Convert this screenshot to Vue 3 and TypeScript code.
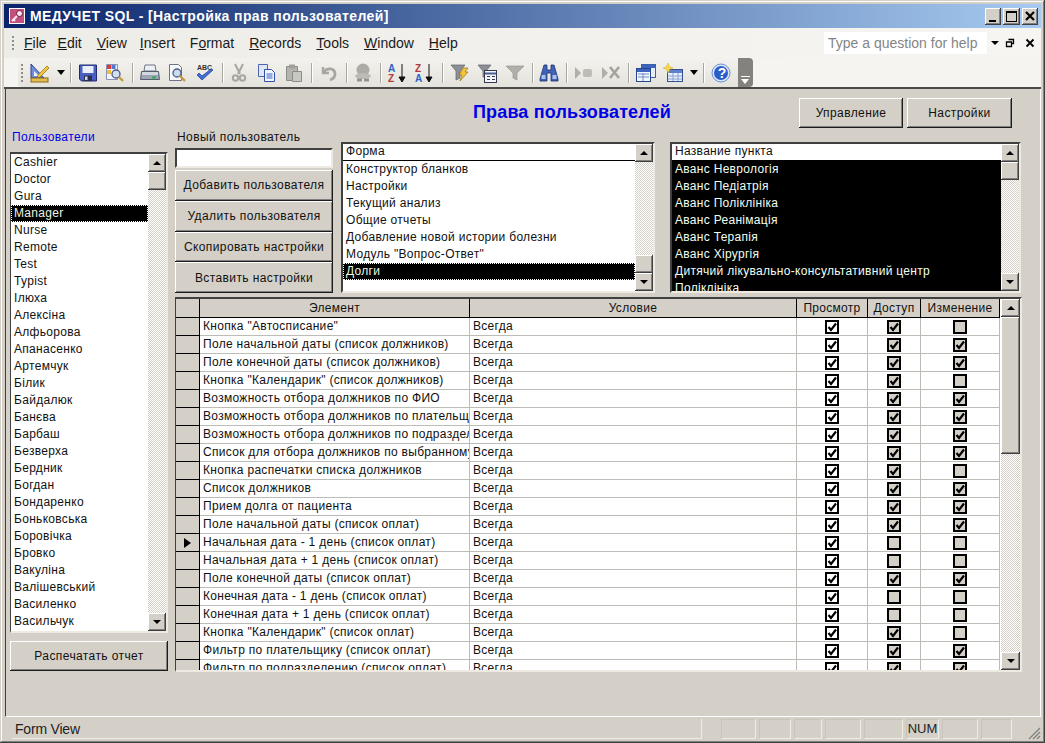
<template>
  <div class="win">
    <div class="titlebar">
      <svg class="app-ico" viewBox="0 0 16 16"><rect x="0.5" y="0.5" width="15" height="15" fill="#f4d8e4" stroke="#fff"/><rect x="1" y="1" width="14" height="14" fill="#c2517f"/><circle cx="10.5" cy="5.5" r="3" fill="#fbe6ef" stroke="#6a1238"/><path d="M8 8 3 13M4 11l2 2" stroke="#fbe6ef" stroke-width="2" fill="none"/></svg>
      <span class="title-text">МЕДУЧЕТ SQL - [Настройка прав пользователей]</span>
      <div class="win-btns">
        <button class="wb"><i class="wb-min"></i></button>
        <button class="wb wb-m"><i class="wb-max"></i></button>
        <button class="wb"><svg viewBox="0 0 10 10" width="10" height="10"><path d="M1 1l8 8M9 1 1 9" stroke="#000" stroke-width="2.200"/></svg></button>
      </div>
    </div>

    <div class="menubar">
      <span class="grip"></span>
      <nav class="menu">
        <span v-for="m in menus" :key="m[1]">{{ m[0] }}<u>{{ m[1] }}</u>{{ m[2] }}</span>
      </nav>
      <div class="help-box">Type a question for help</div>
      <span class="mdi-arrow"></span>
      <svg class="mdi-ico" viewBox="0 0 10 10"><path d="M3.500 1.500h5v4h-2M1.500 4h5v4.500h-5z" fill="none" stroke="#000" stroke-width="1.300"/></svg>
      <svg class="mdi-ico mdi-x" viewBox="0 0 10 10"><path d="M1.500 1.500l7 7M8.500 1.500l-7 7" stroke="#000" stroke-width="1.800"/></svg>
    </div>

    <div class="toolbar-row">
      <div class="toolbar">
        <span class="grip tgrip"></span>
        <svg class="ic" viewBox="0 0 20 20"><path d="M1 1v14h13z" fill="#6f8fd8" stroke="#2c3f90"/><path d="M4 8v5h5z" fill="#edf0fb"/><path d="M8 12 17 3l2 2-9 9-3 1z" fill="#f3c53a" stroke="#8a6a10" stroke-width=".7"/><rect x="1" y="15" width="17" height="4" fill="#e4bd52" stroke="#8a6a10"/></svg>
        <span class="drop"></span>
        <span class="sep"></span>
        <svg class="ic" viewBox="0 0 20 20"><path d="M1.500 2h17v16h-15l-2-2z" fill="#4a5fc0" stroke="#1e2a78"/><rect x="4.500" y="3" width="11" height="7" fill="#e8edf9"/><rect x="6" y="12.500" width="8" height="5.500" fill="#2a2f50"/><rect x="7" y="13.500" width="2.500" height="3.500" fill="#cfd6ea"/></svg>
        <svg class="ic" viewBox="0 0 20 20"><path d="M1.500 1.500h11v15h-11z" fill="#f4f5fb" stroke="#8b93b4"/><rect x="2" y="2" width="4" height="4" fill="#d83a3a"/><rect x="6.500" y="2" width="4" height="4" fill="#4a78d8"/><rect x="2" y="7" width="4" height="4" fill="#e8c23a"/><circle cx="11" cy="11" r="4" fill="#cfe0f4" stroke="#4e5c7e" stroke-width="1.300"/><path d="m14 14 4 4" stroke="#c89a3e" stroke-width="2.400"/></svg>
        <span class="sep"></span>
        <svg class="ic" viewBox="0 0 20 20"><path d="M5 2h10l1 6H4z" fill="#eef0f4" stroke="#6d7486"/><path d="M1.500 8.500h17l1 8H.5z" fill="#9ea6b5" stroke="#565d6d"/><rect x="2" y="9" width="16" height="3" fill="#d4d8e0"/><rect x="12" y="13.500" width="4" height="2" fill="#28b04a"/></svg>
        <svg class="ic" viewBox="0 0 20 20"><path d="M2.500 1.500h9l3 3v13h-12z" fill="#f6f7fb" stroke="#6d7486"/><circle cx="10" cy="10" r="4" fill="#c7dcf2" stroke="#4e5c7e" stroke-width="1.300"/><path d="m13 13 5 5" stroke="#c89a3e" stroke-width="2.400"/></svg>
        <svg class="ic" viewBox="0 0 20 20"><text x="2" y="7" class="mini">ABC</text><path d="M2 12l5 5L18 7l-2-1-9 7-3-3z" fill="#3e6fd8" stroke="#1d3d98" stroke-width=".7"/></svg>
        <span class="sep"></span>
        <svg class="ic" viewBox="0 0 20 20"><path d="M6 1l5 10M14 1 9 11" stroke="#a7a7a0" stroke-width="2"/><circle cx="6.500" cy="15" r="2.700" fill="none" stroke="#a7a7a0" stroke-width="2"/><circle cx="13.500" cy="15" r="2.700" fill="none" stroke="#a7a7a0" stroke-width="2"/></svg>
        <svg class="ic" viewBox="0 0 20 20"><path d="M1.500 1.500h9v12h-9z" fill="#dfe6f6" stroke="#4b65b0"/><path d="M7.500 6.500h7l3 3v9h-10z" fill="#f2f5fc" stroke="#2f4fa8"/><path d="M9.500 11h6M9.500 13h6M9.500 15h6" stroke="#3d63c0"/></svg>
        <svg class="ic" viewBox="0 0 20 20"><path d="M2.500 3.500h11v14h-11z" fill="#b5b5ae" stroke="#8c8c86"/><rect x="5" y="1.500" width="6" height="4" fill="#a1a19a"/><path d="M8.500 8.500h9v10h-9z" fill="#c9c9c3" stroke="#8c8c86"/></svg>
        <span class="sep"></span>
        <svg class="ic" viewBox="0 0 20 20"><path d="M4 4v6h6" fill="none" stroke="#a7a7a0" stroke-width="2.400"/><path d="M4.500 9.500C8 4 16 5 16 11c0 3-2 5-5 6" fill="none" stroke="#a7a7a0" stroke-width="2.800"/></svg>
        <span class="sep"></span>
        <svg class="ic" viewBox="0 0 20 20"><circle cx="10" cy="7" r="6.500" fill="#adada6"/><ellipse cx="10" cy="13" rx="8" ry="3" fill="#bcbcb5"/><path d="M4 17h5M11 17h5" stroke="#93938d" stroke-width="3"/></svg>
        <span class="sep"></span>
        <svg class="ic" viewBox="0 0 20 20"><text x="0" y="9" class="mini-b" fill="#2f62c8">A</text><text x="0" y="19" class="mini-b" fill="#b03a3a">Z</text><path d="M14 1v16M11 14l3 5 3-5z" stroke="#111" fill="#111"/></svg>
        <svg class="ic" viewBox="0 0 20 20"><text x="0" y="9" class="mini-b" fill="#b03a3a">Z</text><text x="0" y="19" class="mini-b" fill="#2f62c8">A</text><path d="M14 1v16M11 14l3 5 3-5z" stroke="#111" fill="#111"/></svg>
        <span class="sep"></span>
        <svg class="ic" viewBox="0 0 20 20"><path d="M1 2h14l-5 6v7l-4 2V8z" fill="#8c8f96" stroke="#5f636c" stroke-width=".7"/><path d="M13 5h5l-3 4h3l-8 9 2-6H9z" fill="#f3c53a" stroke="#927215" stroke-width=".7"/></svg>
        <svg class="ic" viewBox="0 0 20 20"><path d="M1 2h13L9 8v6H6V8z" fill="#8c8f96" stroke="#5f636c" stroke-width=".7"/><rect x="7.500" y="7.500" width="12" height="12" fill="#f3f5fb" stroke="#333b50"/><path d="M8 10.500h11" stroke="#4a5c95" stroke-width="2"/><path d="M10 13h3v1h-3zM15 13h3v1h-3zM10 16h3v1h-3zM15 16h3v1h-3z" fill="#333b50"/></svg>
        <svg class="ic" viewBox="0 0 20 20"><path d="M1 3h18l-7 7v7l-4-2v-5z" fill="#b0b0a9" stroke="#9a9a94" stroke-width=".7"/></svg>
        <span class="sep"></span>
        <svg class="ic" viewBox="0 0 20 20"><path d="M5 2h3v5h4V2h3l4 14v2h-7V10H8v8H1v-2z" fill="#3f63b8" stroke="#1d3170" stroke-width=".8"/><rect x="2.500" y="12" width="4" height="4" fill="#aac2ec"/><rect x="13.500" y="12" width="4" height="4" fill="#aac2ec"/></svg>
        <span class="sep"></span>
        <svg class="ic" viewBox="0 0 20 20"><path d="M1 4l6 6-6 6z" fill="#b0b0a9"/><rect x="9" y="6" width="9" height="8" rx="2" fill="#bdbdb6"/></svg>
        <svg class="ic" viewBox="0 0 20 20"><path d="M1 4l6 6-6 6z" fill="#b0b0a9"/><path d="M9 4l9 11M18 4 9 15" stroke="#a3a39c" stroke-width="2.600"/></svg>
        <span class="sep"></span>
        <svg class="ic" viewBox="0 0 20 20"><rect x="5.500" y="1.500" width="14" height="13" fill="#e7edf9" stroke="#3d5ea8"/><path d="M6 3.500h13" stroke="#3d63c0" stroke-width="3"/><rect x=".5" y="5.500" width="14" height="13" fill="#f3f6fc" stroke="#27468c"/><path d="M1 7.500h13" stroke="#3d63c0" stroke-width="3"/><path d="M2 11h11M2 14h11M7 10v8" stroke="#6f8bc8"/></svg>
        <svg class="ic" viewBox="0 0 20 20"><rect x="4.500" y="6.500" width="15" height="12" fill="#e9eff9" stroke="#35508f"/><path d="M5 8.500h14" stroke="#5d82c9" stroke-width="3"/><path d="M5 13h14M5 16h14M10 10v8M15 10v8" stroke="#8aa3d2"/><path d="M5 0l1.500 3.500L10 5 6.500 6.500 5 10 3.500 6.500 0 5l3.500-1.500z" fill="#f6d84a" stroke="#d9b32a" stroke-width=".5"/></svg>
        <span class="drop"></span>
        <span class="sep"></span>
        <svg class="ic" viewBox="0 0 20 20"><circle cx="10" cy="10" r="9" fill="#dbe7fa" stroke="#6d8fd6"/><circle cx="10" cy="10" r="7" fill="#2d5dc8"/><text x="6.700" y="15" class="qm">?</text></svg>
      </div>
      <div class="tb-handle"><i></i><b></b></div>
    </div>

    <div class="mdi">
      <div class="form-head">
        <h1 class="form-title">Права пользователей</h1>
        <div class="head-btns">
          <button class="btn hb">Управление</button>
          <button class="btn hb">Настройки</button>
        </div>
      </div>
      <div class="form-body">
        <section class="users">
          <div class="lbl lbl-blue">Пользователи</div>
          <div class="list users-list">
            <div class="rows">
              <div v-for="u in users" :key="u" class="row" :class="{ sel: u === 'Manager' }">{{ u }}</div>
            </div>
            <div class="sb">
              <span class="sb-btn"><i class="up"></i></span>
              <span class="sb-btn"></span>
              <span class="sb-track"></span>
              <span class="sb-btn"><i class="down"></i></span>
            </div>
          </div>
          <button class="btn print">Распечатать отчет</button>
        </section>

        <section class="main">
          <div class="top">
            <div class="newuser">
              <div class="lbl">Новый пользователь</div>
              <div class="input"></div>
              <div class="actions">
                <button v-for="a in actions" :key="a" class="btn act">{{ a }}</button>
              </div>
            </div>
            <div class="list forms-list">
              <div class="rows">
                <div class="cap">Форма</div>
                <div v-for="f in forms" :key="f" class="row" :class="{ sel: f === 'Долги' }">{{ f }}</div>
              </div>
              <div class="sb">
                <span class="sb-btn"><i class="up"></i></span>
                <span class="sb-track"></span>
                <span class="sb-btn"></span>
                <span class="sb-btn"><i class="down"></i></span>
              </div>
            </div>
            <div class="list items-list">
              <div class="rows">
                <div class="cap">Название пункта</div>
                <div class="items-black">
                  <div v-for="p in points" :key="p" class="row">{{ p }}</div>
                </div>
              </div>
              <div class="sb">
                <span class="sb-btn"><i class="up"></i></span>
                <span class="sb-btn"></span>
                <span class="sb-track"></span>
                <span class="sb-btn"><i class="down"></i></span>
              </div>
            </div>
          </div>

          <div class="grid-wrap">
            <div class="grid">
              <div class="g-head g-cols">
                <span></span><span>Элемент</span><span>Условие</span><span>Просмотр</span><span>Доступ</span><span>Изменение</span>
              </div>
              <div v-for="r in rights" :key="r.name" class="g-row g-cols">
                <span class="rs"><i v-if="r.cur" class="cur"></i></span>
                <span class="tx">{{ r.name }}</span>
                <span class="tx">Всегда</span>
                <span class="cb-cell"><span class="cb white"><svg v-if="r.v" viewBox="0 0 10 10"><path d="M1.500 5 4 8l5-6.500" fill="none" stroke="#000" stroke-width="2.200"/></svg></span></span>
                <span class="cb-cell"><span class="cb"><svg v-if="r.a" viewBox="0 0 10 10"><path d="M1.500 5 4 8l5-6.500" fill="none" stroke="#000" stroke-width="2.200"/></svg></span></span>
                <span class="cb-cell"><span class="cb"><svg v-if="r.e" viewBox="0 0 10 10"><path d="M1.500 5 4 8l5-6.500" fill="none" stroke="#000" stroke-width="2.200"/></svg></span></span>
              </div>
            </div>
            <div class="sb grid-sb">
              <span class="sb-btn"><i class="up"></i></span>
              <span class="sb-thumb"></span>
              <span class="sb-track"></span>
              <span class="sb-btn"><i class="down"></i></span>
            </div>
          </div>
        </section>
      </div>
    </div>

    <div class="statusbar">
      <span class="st-main">Form View</span>
      <span v-for="(w, i) in statusCells" :key="i" class="st-cell" :style="{ width: w.w + 'px' }">{{ w.t }}</span>
      <svg class="size-grip" viewBox="0 0 14 14"><path d="M13 2 2 13M13 6l-7 7M13 10l-3 3" stroke="#808080" stroke-width="1.300"/></svg>
    </div>
  </div>
</template>

<script setup lang="ts">
const menus: [string, string, string][] = [
  ['', 'F', 'ile'], ['', 'E', 'dit'], ['', 'V', 'iew'], ['', 'I', 'nsert'], ['F', 'o', 'rmat'],
  ['', 'R', 'ecords'], ['', 'T', 'ools'], ['', 'W', 'indow'], ['', 'H', 'elp']
]

const users = [
  'Cashier', 'Doctor', 'Gura', 'Manager', 'Nurse', 'Remote', 'Test', 'Typist', 'Ілюха', 'Алексіна',
  'Алфьорова', 'Апанасенко', 'Артемчук', 'Білик', 'Байдалюк', 'Банєва', 'Барбаш', 'Безверха', 'Бердник',
  'Богдан', 'Бондаренко', 'Боньковська', 'Боровічка', 'Бровко', 'Вакуліна', 'Валішевський', 'Василенко',
  'Васильчук', 'Гаврилюк'
]

const actions = ['Добавить пользователя', 'Удалить пользователя', 'Скопировать настройки', 'Вставить настройки']

const forms = [
  'Конструктор бланков', 'Настройки', 'Текущий анализ', 'Общие отчеты',
  'Добавление новой истории болезни', 'Модуль "Вопрос-Ответ"', 'Долги'
]

const points = [
  'Аванс Неврологія', 'Аванс Педіатрія', 'Аванс Поліклініка', 'Аванс Реанімація', 'Аванс Терапія',
  'Аванс Хірургія', 'Дитячий лікувально-консультативний центр', 'Поліклініка'
]

// name, view, access, edit
const raw: [string, number, number, number][] = [
  ['Кнопка "Автосписание"', 1, 1, 0],
  ['Поле начальной даты (список должников)', 1, 1, 1],
  ['Поле конечной даты (список должников)', 1, 1, 1],
  ['Кнопка "Календарик" (список должников)', 1, 1, 0],
  ['Возможность отбора должников по ФИО', 1, 1, 1],
  ['Возможность отбора должников по плательщику', 1, 1, 1],
  ['Возможность отбора должников по подразделению', 1, 1, 1],
  ['Список для отбора должников по выбранному', 1, 1, 1],
  ['Кнопка распечатки списка должников', 1, 1, 0],
  ['Список должников', 1, 1, 1],
  ['Прием долга от пациента', 1, 1, 1],
  ['Поле начальной даты (список оплат)', 1, 1, 1],
  ['Начальная дата - 1 день (список оплат)', 1, 0, 0],
  ['Начальная дата + 1 день (список оплат)', 1, 0, 0],
  ['Поле конечной даты (список оплат)', 1, 1, 1],
  ['Конечная дата - 1 день (список оплат)', 1, 0, 0],
  ['Конечная дата + 1 день (список оплат)', 1, 0, 0],
  ['Кнопка "Календарик" (список оплат)', 1, 1, 0],
  ['Фильтр по плательщику (список оплат)', 1, 1, 1],
  ['Фильтр по подразделению (список оплат)', 1, 1, 1]
]

const rights = raw.map(([name, v, a, e]) => ({ name, v, a, e, cur: name.startsWith('Начальная дата - 1') }))

const statusCells = [
  { w: 35, t: '' }, { w: 32, t: '' }, { w: 28, t: '' }, { w: 36, t: '' }, { w: 39, t: '' },
  { w: 33, t: 'NUM' }, { w: 36, t: '' }, { w: 31, t: '' }
]
</script>

<style>
html, body { margin: 0; background: #d4d0c8; }
</style>

<style scoped>
.win {
  width: 1045px;
  height: 743px;
  box-sizing: border-box;
  padding: 4px 4px 3px 4px;
  background: #d4d0c8;
  box-shadow: inset -1px -1px #404040, inset 1px 1px #d4d0c8, inset -2px -2px #808080, inset 2px 2px #fff;
  display: flex;
  flex-direction: column;
  overflow: hidden;
  font-family: "Liberation Sans", Arial, sans-serif;
  font-size: 12px;
  color: #111;
}

.titlebar {
  height: 24px;
  flex: none;
  display: flex;
  align-items: center;
  padding: 0 3px 0 5px;
  background: linear-gradient(90deg, #0a246a, #a6caf0);
  color: #fff;
}
.app-ico { width: 16px; height: 16px; margin-right: 5px; }
.title-text { font-weight: 700; font-size: 14px; letter-spacing: .4px; }
.win-btns { margin-left: auto; display: flex; gap: 2px; }
.wb {
  width: 16px;
  height: 17px;
  padding: 0;
  border: 0;
  background: #d4d0c8;
  box-shadow: inset -1px -1px #404040, inset 1px 1px #fff, inset -2px -2px #808080;
  position: relative;
  display: flex;
  align-items: center;
  justify-content: center;
}
.wb-m { width: 17px; }
.wb-min { position: absolute; left: 4px; bottom: 3px; width: 7px; height: 2px; background: #000; }
.wb-max { width: 11px; height: 11px; border: 1px solid #000; border-top-width: 2px; box-sizing: border-box; }

.menubar {
  height: 30px;
  flex: none;
  display: flex;
  align-items: center;
  background: linear-gradient(90deg, #eeece7, #f6f5f2);
  padding-left: 8px;
}
.grip {
  width: 2px;
  height: 14px;
  background: repeating-linear-gradient(#8f8d86 0 2px, transparent 2px 4px);
  flex: none;
}
.menu { display: flex; gap: 15px; margin-left: 10px; font-size: 14px; color: #1a1a1a; }
.menu span:nth-child(1) { margin-right: -4px; }
.menu span:nth-child(3) { margin-right: -2px; }
.help-box {
  margin-left: auto;
  width: 163px;
  height: 22px;
  box-sizing: border-box;
  padding-left: 4px;
  background: #fff;
  color: #858585;
  font-size: 14px;
  line-height: 22px;
  margin-top: -1px;
}
.mdi-arrow { margin-left: 4px; border: 4px solid transparent; border-top-color: #000; border-bottom: 0; }
.mdi-ico { width: 10px; height: 10px; margin-left: 6px; }
.mdi-x { margin-left: 10px; margin-right: 6px; }

.toolbar-row {
  height: 31px;
  flex: none;
  display: flex;
  padding-left: 14px;
  background: #f5f4f1;
  border-bottom: 2px solid #4a4a48;
  box-sizing: border-box;
}
.toolbar {
  width: 720px;
  height: 29px;
  box-sizing: border-box;
  display: flex;
  align-items: center;
  padding-left: 3px;
  border-radius: 4px 0 0 4px;
  background: linear-gradient(#f3f2ee, #e4e2dc);
}
.tgrip { margin-right: 3.25px; height: 18px; }
.ic { width: 20px; height: 20px; margin: 0 3.75px; flex: none; }
.drop { width: 0; height: 0; border: 4.5px solid transparent; border-top: 5px solid #000; border-bottom: 0; margin: 0 1.75px 0 3.25px; flex: none; }
.sep { width: 1px; height: 20px; background: #a8a6a0; box-shadow: 1px 0 #fff; margin: 0 2.75px 0 3.25px; flex: none; }
.mini { font: 700 7px "Liberation Sans", sans-serif; fill: #333; }
.mini-b { font: 700 10px "Liberation Sans", sans-serif; }
.qm { font: 700 14px "Liberation Sans", sans-serif; fill: #fff; }
.tb-handle {
  width: 15px;
  height: 29px;
  border-radius: 0 4px 4px 0;
  background: #83827e;
  position: relative;
}
.tb-handle i { position: absolute; left: 3px; top: 18px; width: 9px; height: 1px; background: #fff; }
.tb-handle b { position: absolute; left: 3px; top: 21px; border: 4.5px solid transparent; border-top: 5px solid #fff; border-bottom: 0; }

.mdi {
  flex: 1;
  min-height: 0;
  margin: 0 0 0 1px;
  box-sizing: border-box;
  padding: 7px 19px 0 4px;
  border-left: 1px solid #404040;
  border-right: 1px solid #fff;
  border-bottom: 1px solid #fff;
  display: flex;
  flex-direction: column;
}
.form-head {
  height: 35px;
  flex: none;
  display: flex;
  position: relative;
  justify-content: flex-end;
}
.form-title {
  position: absolute;
  left: 463px;
  top: 5px;
  margin: 0;
  font-size: 18px;
  line-height: 22px;
  font-weight: 700;
  letter-spacing: .15px;
  color: #0000e6;
}
.head-btns { display: flex; gap: 4px; height: 30px; margin: 2px 9px 0 0; }
.btn {
  border: 0;
  padding: 0;
  background: #d4d0c8;
  color: #111;
  font: 12px "Liberation Sans", Arial, sans-serif;
  letter-spacing: .4px;
  box-shadow: inset -1px -1px #1c1c1c, inset 1px 1px #fff, inset -2px -2px #808080;
}
.hb { width: 104px; }
.hb:last-child { width: 105px; }

.form-body { display: flex; gap: 7px; flex: 1; min-height: 0; }
.users { width: 158px; flex: none; display: flex; flex-direction: column; }
.lbl { height: 19px; line-height: 13px; letter-spacing: .4px; padding-left: 2px; }
.lbl-blue { color: #0000e6; padding-left: 2px; margin-bottom: 2px; }
.list {
  display: flex;
  box-sizing: border-box;
  background: #fff;
  border: 2px solid;
  border-color: #404040 #eeeae2 #eeeae2 #404040;
  overflow: hidden;
}
.users-list { height: 481px; flex: none; border-left-width: 1px; }
.rows { flex: 1; min-width: 0; overflow: hidden; }
.row {
  height: 17px;
  line-height: 17px;
  padding-left: 3px;
  white-space: nowrap;
  letter-spacing: .3px;
}
.sel { background: #000; color: #eaf7e2; outline: 1px dotted #fff; outline-offset: -1px; }
.cap { height: 16px; line-height: 15px; padding-left: 3px; border-bottom: 1px solid #000; letter-spacing: .3px; }
.sb { width: 18px; flex: none; display: flex; flex-direction: column; }
.sb-btn {
  height: 18px;
  flex: none;
  background: #d4d0c8;
  box-shadow: inset -1px -1px #404040, inset 1px 1px #fff, inset -2px -2px #808080;
  display: flex;
  align-items: center;
  justify-content: center;
}
.sb-thumb {
  height: 137px;
  flex: none;
  background: #d4d0c8;
  box-shadow: inset -1px -1px #404040, inset 1px 1px #fff, inset -2px -2px #808080;
}
.sb-track {
  flex: 1;
  background: repeating-conic-gradient(#d4d0c8 0 25%, #fff 0 50%) 0 0 / 2px 2px;
}
.up { border: 4px solid transparent; border-bottom: 4px solid #000; border-top: 0; }
.down { border: 4px solid transparent; border-top: 4px solid #000; border-bottom: 0; }
.print { height: 30px; margin-top: 8px; flex: none; }

.main { flex: 1; min-width: 0; display: flex; flex-direction: column; }
.top { height: 162px; flex: none; display: flex; }
.newuser { width: 158px; flex: none; margin-right: 8px; display: flex; flex-direction: column; }
.newuser .lbl { margin-bottom: 1px; }
.input {
  height: 20px;
  box-sizing: border-box;
  background: #fff;
  border: 2px solid;
  border-color: #404040 #eeeae2 #eeeae2 #404040;
  flex: none;
}
.actions { display: flex; flex-direction: column; margin-top: 2px; }
.act { height: 30.75px; flex: none; padding: 0; }
.forms-list { width: 314px; height: 151px; margin-top: 11px; flex: none; }
.items-list { width: 351px; height: 151px; margin: 11px 0 0 15px; flex: none; }
.items-black { background: #000; color: #f0fff0; height: 134px; overflow: hidden; }

.grid-wrap {
  height: 375px;
  margin-top: 4px;
  width: 847px;
  box-sizing: border-box;
  display: flex;
  border: 2px solid;
  border-color: #404040 #eeeae2 #eeeae2 #404040;
  border-left-width: 1px;
  background: #fff;
}
.grid { width: 824px; flex: none; overflow: hidden; background: #fff; }
.grid-sb { margin-left: 1px; width: 19px; }
.g-cols { display: grid; grid-template-columns: 24px 270px 327px 71px 53px 79px; }
.g-head { height: 19px; box-sizing: border-box; background: #d4d0c8; border-bottom: 1px solid #000; }
.g-head span { text-align: center; line-height: 18px; border-right: 1px solid #000; letter-spacing: .3px; }
.g-row { height: 18px; box-sizing: border-box; border-bottom: 1px solid #bdbdb8; }
.g-row > span { border-right: 1px solid #bdbdb8; min-width: 0; }
.g-row > .rs {
  background: #d4d0c8;
  border-right: 1px solid #000;
  margin-bottom: -1px;
  border-bottom: 1px solid #000;
  display: flex;
  align-items: center;
  justify-content: center;
}
.cur { border: 5px solid transparent; border-left: 7px solid #000; border-right: 0; }
.tx { padding-left: 3px; line-height: 17px; white-space: nowrap; overflow: hidden; letter-spacing: .3px; }
.cb-cell { display: flex; justify-content: center; align-items: center; }
.cb {
  width: 14px;
  height: 14px;
  box-sizing: border-box;
  border: 2px solid #000;
  background: #d4d0c8;
  display: block;
}
.cb.white { background: #fff; }
.cb svg { display: block; width: 10px; height: 10px; }

.statusbar {
  height: 22px;
  flex: none;
  margin-top: 1px;
  display: flex;
  align-items: center;
  gap: 3px;
  padding: 0 29px 0 8px;
  position: relative;
}
.st-main {
  flex: 1;
  height: 20px;
  margin-right: 16px;
  box-sizing: border-box;
  border-right: 1px solid #f0ede6;
  border-bottom: 1px solid #f0ede6;
  font-size: 14px;
  line-height: 20px;
  letter-spacing: -.2px;
  color: #222;
  padding-left: 3px;
}
.st-cell {
  height: 20px;
  box-sizing: border-box;
  border: 1px solid;
  border-color: #c8c4bc #f0ede6 #f0ede6 #c8c4bc;
  text-align: center;
  line-height: 18px;
  font-size: 13px;
  color: #222;
}
.size-grip { position: absolute; right: 0; bottom: 0; width: 14px; height: 14px; }
</style>
